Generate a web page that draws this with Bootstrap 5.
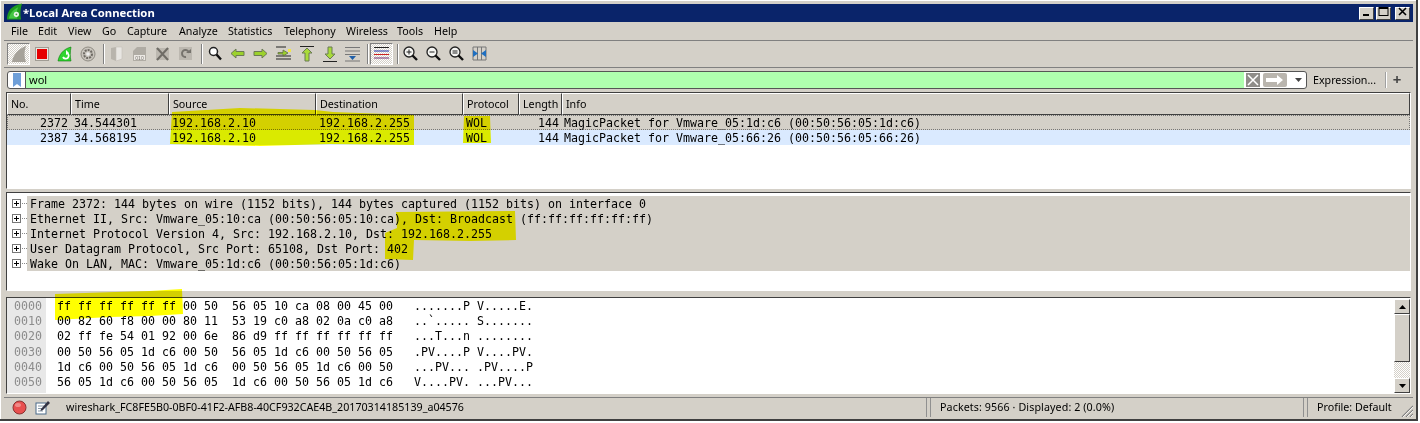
<!DOCTYPE html>
<html lang="en">
<head>
<meta charset="utf-8">
<title>Local Area Connection</title>
<link href="https://cdn.jsdelivr.net/npm/bootstrap@5.3.0/dist/css/bootstrap.min.css" rel="stylesheet">
<style>
html,body{background:#fff;overflow:hidden;height:423px}
body{font-family:"Noto Sans","Liberation Sans",sans-serif;font-size:10.7px;line-height:1;color:#000}
.win{position:relative;width:1418px;height:421px;background:#d4d0c8;border-right:2px solid #404040;border-bottom:2px solid #404040;padding:4px 3px 3px 4px;box-shadow:inset 1px 1px 0 #fff}
.ttl{height:18px;background:#0a246a;color:#fff;font-weight:700;font-size:11.3px;padding-left:3px;flex:none}
.ttl svg{margin-right:1px;margin-top:-3px}
.wbtn{width:15px;height:13px;background:#d4d0c8;border:1px solid;border-color:#fff #404040 #404040 #fff;display:flex;align-items:center;justify-content:center}
.wbtns{margin-right:3px}
.wbtn+.wbtn{margin-left:2px}
.mnu{height:18px;flex:none;padding-left:7px;border-bottom:1px solid #808080;box-sizing:content-box}
.mnu span{display:block}
.mnu span:nth-child(1){width:27px}.mnu span:nth-child(2){width:30px}.mnu span:nth-child(3){width:34px}.mnu span:nth-child(4){width:25px}.mnu span:nth-child(5){width:52px}.mnu span:nth-child(6){width:49px}.mnu span:nth-child(7){width:56px}.mnu span:nth-child(8){width:62px}.mnu span:nth-child(9){width:51px}.mnu span:nth-child(10){width:37px}
.tbar{height:25px;flex:none;padding:0 0 1px 3px;border-bottom:1px solid #808080;box-sizing:content-box}
.tb{width:23px;height:22px;display:flex;align-items:center;justify-content:center;flex:none}
.tbp{border:1px solid;border-color:#808080 #fff #fff #808080;background:repeating-conic-gradient(#fff 0 25%,#d4d0c8 0 50%) 0 0/2px 2px}
.tsep{width:2px;height:20px;background:#808080;border-right:1px solid #fff;flex:none;margin-left:4px}
.ts3{margin-left:3px;margin-right:1px}
.frow{height:24px;flex:none;padding:3px 0 0 3px}
.fbox{width:1300px;height:18px;border:1px solid #555;border-radius:3px;background:#fff;overflow:hidden;flex:none}
.fbm{width:18px;border-right:1px solid #555;display:flex;align-items:center;justify-content:center;flex:none}
.ftxt{flex:1;background:#afffaf;padding-left:3px;font-size:11px;line-height:16px}
.fx{width:14px;height:14px;background:#8f8d89;margin:0 3px 0 2px;display:flex;align-items:center;justify-content:center;flex:none}
.fgo{width:24px;height:14px;background:#b9b5ae;border-radius:2px;display:flex;align-items:center;justify-content:center;flex:none}
.fdd{width:19px;display:flex;align-items:center;justify-content:center;flex:none;padding-left:4px}
.fexp{width:78px;height:18px;padding-left:6px;white-space:nowrap;line-height:18px}
.fsep{width:2px;height:16px;margin-top:1px;background:#a0a0a0;border-right:1px solid #fff}
.fplus{width:20px;height:18px;line-height:17px;text-align:center;font-weight:700;font-size:15px;color:#444}
.pane{margin-left:2px;margin-right:2px;border:1px solid;border-color:#404040 #fff #fff #404040;flex:none;background:#fff;font-family:"DejaVu Sans Mono","Liberation Mono",monospace;font-size:11.63px}
.plist{height:97px}
.phead{display:grid;grid-template-columns:64px 98px 147px 147px 56px 43px 1fr;height:22px;font-family:"Noto Sans","Liberation Sans",sans-serif;font-size:10.7px}
.phead div{background:#d4d0c8;border:1px solid;border-color:#fff #404040 #404040 #fff;padding:5px 0 0 3px;white-space:nowrap}
.prow{display:grid;grid-template-columns:64px 98px 147px 147px 56px 43px 1fr;height:15px;line-height:17px;white-space:pre}
.prow span{padding-left:3px}
.prow span:last-child{padding-left:2px}
.prow .rgt{text-align:right;padding:0 3px 0 0}
.psel{background:#d4d0c8;outline:1px dotted #777;outline-offset:-1px}
.pnxt{background:#daeaff}
.gap3{height:3px;flex:none}
.gap4{height:6px;flex:none}
.pdet{height:99px;padding-top:3px}
.drow{height:15px;display:flex;white-space:pre}
.dexp{width:20px;flex:none;height:15px;display:flex;align-items:center;padding-left:5px;background:#fff}
.dtxt{flex:1;height:15px;line-height:17px;background:#d4d0c8;padding-left:3px}
.phex{height:97px;display:flex}
.hgut{width:39px;background:#e8e8e8;color:#8c8c8c;padding:1px 0 0 7px;white-space:pre;line-height:15.2px;flex:none}
.hbody{flex:1;padding:1px 0 0 11px;white-space:pre;line-height:15.2px}
.sbar{width:16px;flex:none;display:flex;flex-direction:column;padding-top:1px}
.sbtn{width:16px;height:15px;background:#d4d0c8;border:1px solid;border-color:#fff #404040 #404040 #fff;display:flex;align-items:center;justify-content:center;flex:none}
.sthumb{height:48px;background:#d4d0c8;border:1px solid;border-color:#fff #404040 #404040 #fff;flex:none}
.sdith{flex:1;background:repeating-conic-gradient(#fff 0 25%,#d4d0c8 0 50%) 0 0/2px 2px}
.stat{height:19px;flex:none;margin-top:3px;border-top:1px solid #808080;box-sizing:content-box}
.sleft{width:922px;padding-left:4px;display:flex;align-items:center;flex:none}
.smid{width:372px;padding-left:9px;flex:none;white-space:nowrap;letter-spacing:.1px}
.sprof{padding-left:9px;white-space:nowrap;flex:none;width:92px}
.stxt{white-space:nowrap}
.ssep{width:5px;height:19px;border-left:1px solid #909090;border-right:1px solid #909090;flex:none}
.grip{flex:none;align-self:flex-end;margin-left:0}
.ink{position:absolute;left:0;top:0;width:1418px;height:421px;mix-blend-mode:multiply;pointer-events:none}
</style>
</head>
<body class="m-0">
<div class="win d-flex flex-column">

  <div class="ttl d-flex align-items-center">
    <svg width="15" height="18" viewBox="0 0 16 18"><path d="M0 17C0 9 4 2 16 0C14 6 14 12 15 17Z" fill="#1f9b1f"/><path d="M2 16C3 11 6 7 12 4C10 8 10 12 11 16Z" fill="#45c745"/><circle cx="10" cy="11.500" r="2.800" fill="#e6f5e6"/><circle cx="10" cy="11.500" r="1" fill="#4a9a4a"/></svg>
    <span>*Local Area Connection</span>
    <div class="ms-auto d-flex wbtns">
      <div class="wbtn"><svg width="9" height="9"><rect x="1" y="7" width="6" height="2" fill="#000"/></svg></div>
      <div class="wbtn"><svg width="11" height="9"><rect x="1" y="0.500" width="9" height="8" fill="none" stroke="#000"/><rect x="1" y="0" width="9" height="2"/></svg></div>
      <div class="wbtn ms-1"><svg width="9" height="9"><path d="M1 1L8 8M8 1L1 8" stroke="#000" stroke-width="1.600"/></svg></div>
    </div>
  </div>

  <div class="mnu d-flex align-items-center">
    <span>File</span><span>Edit</span><span>View</span><span>Go</span><span>Capture</span><span>Analyze</span><span>Statistics</span><span>Telephony</span><span>Wireless</span><span>Tools</span><span>Help</span>
  </div>

  <div class="tbar d-flex align-items-center">
    <div class="tb tbp"><svg width="18" height="18" viewBox="0 0 18 18"><path d="M2 17C3 10 8 4 16 1C14 7 14 12 16 17Z" fill="#a6a29a"/></svg></div>
    <div class="tb"><svg width="14" height="14"><rect x="0.500" y="0.500" width="13" height="13" fill="#e8e6e0" stroke="#a09c94"/><rect x="2" y="2" width="10" height="10" fill="#e60000"/></svg></div>
    <div class="tb"><svg width="16" height="16" viewBox="0 0 16 16"><path d="M1 15C2 9 6 3 14 1C13 6 13 11 14 15Z" fill="#2fd52f" stroke="#0a7a0a" stroke-width=".6"/><path d="M6 11A3 3 0 1 0 10 7" fill="none" stroke="#fff" stroke-width="1.800"/><path d="M9 4L12 7L9 9Z" fill="#fff"/></svg></div>
    <div class="tb"><svg width="16" height="16" viewBox="0 0 16 16"><circle cx="8" cy="8" r="7" fill="#c8c4bc" stroke="#908c84"/><circle cx="8" cy="8" r="4" fill="none" stroke="#6e6a64" stroke-width="2" stroke-dasharray="2 1"/><circle cx="8" cy="8" r="1.800" fill="#eee"/></svg></div>
    <div class="tsep"></div>
    <div class="tb"><svg width="13" height="16" viewBox="0 0 13 16"><path d="M1 2L6 1V15L1 13Z" fill="#b8b4ac"/><path d="M6 1H12V13L6 15Z" fill="#e8e6e2" stroke="#c4c0b8" stroke-width=".6"/></svg></div>
    <div class="tb"><svg width="15" height="16" viewBox="0 0 15 16"><path d="M1 5L5 1H14V15H1Z" fill="#b0aca4"/><rect x="2" y="9" width="11" height="5" fill="#ece9e4"/><text x="7.500" y="13.500" font-size="5" text-anchor="middle" fill="#77736c" font-family="Liberation Sans">010</text></svg></div>
    <div class="tb"><svg width="15" height="15" viewBox="0 0 15 15"><rect x="1" y="2" width="13" height="12" fill="#bcb8b0"/><path d="M2 2L13 14M13 2L2 14" stroke="#6f6c66" stroke-width="2"/></svg></div>
    <div class="tb"><svg width="15" height="15" viewBox="0 0 15 15"><rect x="1" y="1" width="13" height="13" fill="#bcb8b0"/><path d="M11 7A3.500 3.500 0 1 0 8 11" fill="none" stroke="#76736d" stroke-width="2"/><path d="M8 7H13V3Z" fill="#76736d"/></svg></div>
    <div class="tsep"></div>
    <div class="tb"><svg width="14" height="15" viewBox="0 0 14 15"><circle cx="5.500" cy="5.500" r="4" fill="#fff" stroke="#222" stroke-width="1.500"/><path d="M8.500 8.500L13 13.500" stroke="#111" stroke-width="2.400"/></svg></div>
    <div class="tb"><svg width="15" height="11" viewBox="0 0 15 11"><path d="M1 5.500L6 1V3.500H14V7.500H6V10Z" fill="#9cd12c" stroke="#6b7a55"/></svg></div>
    <div class="tb"><svg width="15" height="11" viewBox="0 0 15 11"><path d="M14 5.500L9 1V3.500H1V7.500H9V10Z" fill="#9cd12c" stroke="#6b7a55"/></svg></div>
    <div class="tb"><svg width="16" height="15" viewBox="0 0 16 15"><path d="M0 1H10M0 10H15M0 13H15" stroke="#222"/><path d="M2 6.500H7V4L12 7L7 10V8H2Z" fill="#9cd12c" stroke="#5f6d45" stroke-width=".8"/><rect x="12" y="3" width="3" height="3" fill="#f2e64a"/></svg></div>
    <div class="tb"><svg width="14" height="16" viewBox="0 0 14 16"><path d="M0 .500H14" stroke="#222"/><path d="M7 2L12 7H9V15H5V7H2Z" fill="#a9db3a" stroke="#6b7a55"/></svg></div>
    <div class="tb"><svg width="14" height="16" viewBox="0 0 14 16"><path d="M0 15.500H14" stroke="#222"/><path d="M7 13L12 8H9V1H5V8H2Z" fill="#a9db3a" stroke="#6b7a55"/></svg></div>
    <div class="tb"><svg width="15" height="16" viewBox="0 0 15 16"><path d="M0 1.500H15M0 5H15M0 8.500H15M0 15H15" stroke="#777"/><path d="M4 10H11L7.500 14Z" fill="#1f5fa8"/></svg></div>
    <div class="tsep ts3"></div>
    <div class="tb tbp"><svg width="15" height="15" viewBox="0 0 15 15"><path d="M0 1.500H15" stroke="#222"/><path d="M0 5H15" stroke="#23a"/><path d="M0 8.500H15" stroke="#c22"/><path d="M0 12H15" stroke="#737"/></svg></div>
    <div class="tsep"></div>
    <div class="tb"><svg width="15" height="15" viewBox="0 0 15 15"><circle cx="6" cy="6" r="5" fill="#f5f5f2" stroke="#222" stroke-width="1.300"/><path d="M3.500 6H8.500M6 3.500V8.500" stroke="#222"/><path d="M9.500 9.500L14 14" stroke="#111" stroke-width="2.400"/></svg></div>
    <div class="tb"><svg width="15" height="15" viewBox="0 0 15 15"><circle cx="6" cy="6" r="5" fill="#f5f5f2" stroke="#222" stroke-width="1.300"/><path d="M3.500 6H8.500" stroke="#222"/><path d="M9.500 9.500L14 14" stroke="#111" stroke-width="2.400"/></svg></div>
    <div class="tb"><svg width="15" height="15" viewBox="0 0 15 15"><circle cx="6" cy="6" r="5" fill="#f5f5f2" stroke="#222" stroke-width="1.300"/><path d="M3.500 5H8.500M3.500 7H8.500" stroke="#222"/><path d="M9.500 9.500L14 14" stroke="#111" stroke-width="2.400"/></svg></div>
    <div class="tb"><svg width="15" height="15" viewBox="0 0 15 15"><path d="M1 1V14M5.500 1V14M9.500 1V14M14 1V14M1 1H14M1 14H14" stroke="#777" fill="none"/><path d="M1 4L6 7.500L1 11ZM14 4L9 7.500L14 11Z" fill="#1f6fc0"/></svg></div>
  </div>

  <div class="frow d-flex align-items-start">
    <div class="fbox d-flex">
      <div class="fbm"><svg width="8" height="14" viewBox="0 0 8 14"><path d="M0 0H8V14L4 11L0 14Z" fill="#6f9fd8"/></svg></div>
      <div class="ftxt">wol</div>
      <div class="d-flex align-items-center">
        <div class="fx"><svg width="12" height="12"><path d="M1 1L11 11M11 1L1 11" stroke="#fff" stroke-width="1.500"/></svg></div>
        <div class="fgo"><svg width="18" height="10" viewBox="0 0 18 10"><path d="M0 3H11V0L17 5L11 10V7H0Z" fill="#fff"/></svg></div>
        <div class="fdd"><svg width="7" height="4"><path d="M0 0H7L3.500 4Z" fill="#444"/></svg></div>
      </div>
    </div>
    <div class="fexp">Expression...</div>
    <div class="fsep"></div>
    <div class="fplus">+</div>
  </div>

  <div class="pane plist">
    <div class="phead"><div>No.</div><div>Time</div><div>Source</div><div>Destination</div><div>Protocol</div><div>Length</div><div>Info</div></div>
    <div class="prow psel"><span class="rgt">2372</span><span>34.544301</span><span>192.168.2.10</span><span>192.168.2.255</span><span>WOL</span><span class="rgt">144</span><span>MagicPacket for Vmware_05:1d:c6 (00:50:56:05:1d:c6)</span></div>
    <div class="prow pnxt"><span class="rgt">2387</span><span>34.568195</span><span>192.168.2.10</span><span>192.168.2.255</span><span>WOL</span><span class="rgt">144</span><span>MagicPacket for Vmware_05:66:26 (00:50:56:05:66:26)</span></div>
  </div>
  <div class="gap3"></div>

  <div class="pane pdet">
    <div class="drow"><div class="dexp"><svg width="15" height="9"><rect x=".5" y=".5" width="8" height="8" fill="#fff" stroke="#777"/><path d="M2 4.500H7M4.500 2V7" stroke="#000"/><path d="M10 4.500H15" stroke="#888" stroke-dasharray="1 1"/></svg></div><div class="dtxt">Frame 2372: 144 bytes on wire (1152 bits), 144 bytes captured (1152 bits) on interface 0</div></div>
    <div class="drow"><div class="dexp"><svg width="15" height="9"><rect x=".5" y=".5" width="8" height="8" fill="#fff" stroke="#777"/><path d="M2 4.500H7M4.500 2V7" stroke="#000"/><path d="M10 4.500H15" stroke="#888" stroke-dasharray="1 1"/></svg></div><div class="dtxt">Ethernet II, Src: Vmware_05:10:ca (00:50:56:05:10:ca), Dst: Broadcast (ff:ff:ff:ff:ff:ff)</div></div>
    <div class="drow"><div class="dexp"><svg width="15" height="9"><rect x=".5" y=".5" width="8" height="8" fill="#fff" stroke="#777"/><path d="M2 4.500H7M4.500 2V7" stroke="#000"/><path d="M10 4.500H15" stroke="#888" stroke-dasharray="1 1"/></svg></div><div class="dtxt">Internet Protocol Version 4, Src: 192.168.2.10, Dst: 192.168.2.255</div></div>
    <div class="drow"><div class="dexp"><svg width="15" height="9"><rect x=".5" y=".5" width="8" height="8" fill="#fff" stroke="#777"/><path d="M2 4.500H7M4.500 2V7" stroke="#000"/><path d="M10 4.500H15" stroke="#888" stroke-dasharray="1 1"/></svg></div><div class="dtxt">User Datagram Protocol, Src Port: 65108, Dst Port: 402</div></div>
    <div class="drow"><div class="dexp"><svg width="15" height="9"><rect x=".5" y=".5" width="8" height="8" fill="#fff" stroke="#777"/><path d="M2 4.500H7M4.500 2V7" stroke="#000"/><path d="M10 4.500H15" stroke="#888" stroke-dasharray="1 1"/></svg></div><div class="dtxt">Wake On LAN, MAC: Vmware_05:1d:c6 (00:50:56:05:1d:c6)</div></div>
  </div>
  <div class="gap4"></div>

  <div class="pane phex">
    <div class="hgut">0000
0010
0020
0030
0040
0050</div>
    <div class="hbody">ff ff ff ff ff ff 00 50  56 05 10 ca 08 00 45 00   .......P V.....E.
00 82 60 f8 00 00 80 11  53 19 c0 a8 02 0a c0 a8   ..`..... S.......
02 ff fe 54 01 92 00 6e  86 d9 ff ff ff ff ff ff   ...T...n ........
00 50 56 05 1d c6 00 50  56 05 1d c6 00 50 56 05   .PV....P V....PV.
1d c6 00 50 56 05 1d c6  00 50 56 05 1d c6 00 50   ...PV... .PV....P
56 05 1d c6 00 50 56 05  1d c6 00 50 56 05 1d c6   V....PV. ...PV...</div>
    <div class="sbar">
      <div class="sbtn"><svg width="7" height="4"><path d="M0 4H7L3.500 0Z"/></svg></div>
      <div class="sthumb"></div>
      <div class="sdith"></div>
      <div class="sbtn"><svg width="7" height="4"><path d="M0 0H7L3.500 4Z"/></svg></div>
    </div>
  </div>

  <div class="stat d-flex align-items-center">
    <div class="sleft">
      <svg class="ms-1" width="15" height="15" viewBox="0 0 15 15"><circle cx="7.500" cy="7.500" r="6.500" fill="#e8504f" stroke="#8a3030"/><ellipse cx="6" cy="5" rx="3" ry="2" fill="#f08a88"/></svg>
      <svg class="ms-2" width="15" height="15" viewBox="0 0 15 15"><rect x="1" y="3" width="10" height="11" fill="#fff" stroke="#4a6a8a"/><path d="M3 6H9M3 8.500H9M3 11H8" stroke="#89a"/><path d="M6 9L13 1L15 3L8 10L5.500 11Z" fill="#334"/></svg>
      <span class="stxt ms-3">wireshark_FC8FE5B0-0BF0-41F2-AFB8-40CF932CAE4B_20170314185139_a04576</span>
    </div>
    <div class="ssep"></div>
    <div class="smid">Packets: 9566 · Displayed: 2 (0.0%)</div>
    <div class="ssep"></div>
    <div class="sprof">Profile: Default</div>
    <svg class="grip" width="13" height="13" viewBox="0 0 13 13"><path d="M2 13L13 2M6 13L13 6M10 13L13 10" stroke="#808080" stroke-width="1.200"/><path d="M3 13L13 3M7 13L13 7M11 13L13 11" stroke="#fff" stroke-width=".8"/></svg>
  </div>
  <svg class="ink" viewBox="0 0 1418 421">
    <path d="M172 112L240 108L315 110L333 112L414 115L414 145L330 144L260 146L170 144Z" fill="#ff0"/>
    <path d="M464 116L490 116L491 143L463 143Z" fill="#ff0"/>
    <path d="M396 212L515 211L516 240L470 241L414 240L413 260L385 259L385 233L397 228Z" fill="#ff0"/>
    <path d="M55 294L115 292L150 291L182 289L183 314L150 316L110 317L55 320Z" fill="#ff0"/>
  </svg>
</div>
</body>
</html>
